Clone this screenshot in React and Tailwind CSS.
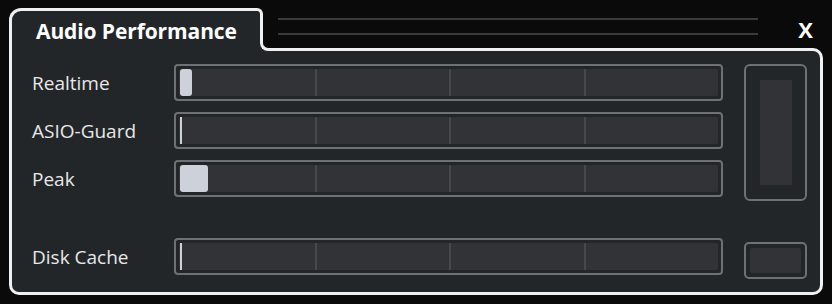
import React from 'react';

const BODY = 'bg-[#232629]';

function Meter({ fill }) {
  return (
    <div className="w-[549px] h-[37px] rounded-[4px] border-2 border-[#6d7074] p-[3px]">
      <div className="relative h-full rounded-[2px] bg-[#323337] flex pl-[3px]">
        <div className="flex-1" />
        <div className="flex-1 border-l-2 border-[#46484c]" />
        <div className="flex-1 border-l-2 border-[#46484c]" />
        <div className="flex-1 border-l-2 border-[#46484c]" />
        {fill > 2 ? (
          <div className="absolute left-[1px] top-0 bottom-0 rounded-[3px] bg-[#cdd1d9]" style={{ width: fill }} />
        ) : (
          <div className="absolute left-[1px] top-0 bottom-0 w-[2px] bg-[#cdd1d9]" />
        )}
      </div>
    </div>
  );
}

function Row({ label, fill, className = '' }) {
  return (
    <div className={`flex items-center h-[37px] ${className}`}>
      <div className="w-[142px] pt-[2px] text-[19px] text-[#e8e8e8]">{label}</div>
      <Meter fill={fill} />
    </div>
  );
}

export default function App() {
  return (
    <div
      className="w-[832px] h-[304px] bg-[#0a0a0a] pt-[8px] px-[9px] pb-[9px] flex flex-col"
      style={{ fontFamily: '"Open Sans", "Noto Sans", sans-serif' }}
    >
      {/* header: tab + title strip */}
      <div className="flex h-[43px]">
        <div className={`relative z-10 w-[254px] h-[43px] border-t-[3px] border-l-[3px] border-r-[3px] border-[#f0f0f0] rounded-tl-[12px] rounded-tr-[6px] ${BODY} flex items-center pl-[24px] pt-[2px]`}>
          <span className="text-[21px] font-bold text-white tracking-[-0.1px]">Audio Performance</span>
        </div>
        <div className="relative z-10 flex-1 flex flex-col ml-[-3px]">
          <div className="flex-1 flex pl-[18px]">
            <div className="w-[480px] pt-[10px] flex flex-col gap-[13px]">
              <div className="h-[2px] bg-[#3a3a3a]" />
              <div className="h-[2px] bg-[#3a3a3a]" />
            </div>
            <div className="flex-1 flex justify-end pr-[10px] pt-[10px]">
              <span className="text-[22px] font-bold text-white leading-none">X</span>
            </div>
          </div>
          <div className={`h-[11px] mr-[10px] ${BODY}`}>
            <div className="h-full border-l-[3px] border-b-[3px] border-[#f0f0f0] rounded-bl-[8px] bg-[#0a0a0a]" />
          </div>
        </div>
      </div>

      {/* body */}
      <div className={`flex-1 mt-[-3px] border-[3px] border-[#f0f0f0] rounded-tr-[10px] rounded-b-[10px] ${BODY} flex pl-[20px] pt-[13px] pr-[13px]`}>
        <div className="flex flex-col">
          <Row label="Realtime" fill={12} />
          <Row label="ASIO-Guard" fill={0} className="mt-[11px]" />
          <Row label="Peak" fill={28} className="mt-[11px]" />
          <Row label="Disk Cache" fill={0} className="mt-[41px]" />
        </div>
        <div className="ml-[21px] flex flex-col">
          <div className="w-[63px] h-[137px] rounded-[6px] border-2 border-[#6d7074] py-[14px] flex justify-center">
            <div className="w-[32px] h-full bg-[#323337]" />
          </div>
          <div className="mt-[41px] w-[63px] h-[37px] rounded-[5px] border-2 border-[#6d7074] p-[4px]">
            <div className="h-full rounded-[2px] bg-[#323337]" />
          </div>
        </div>
      </div>
    </div>
  );
}
